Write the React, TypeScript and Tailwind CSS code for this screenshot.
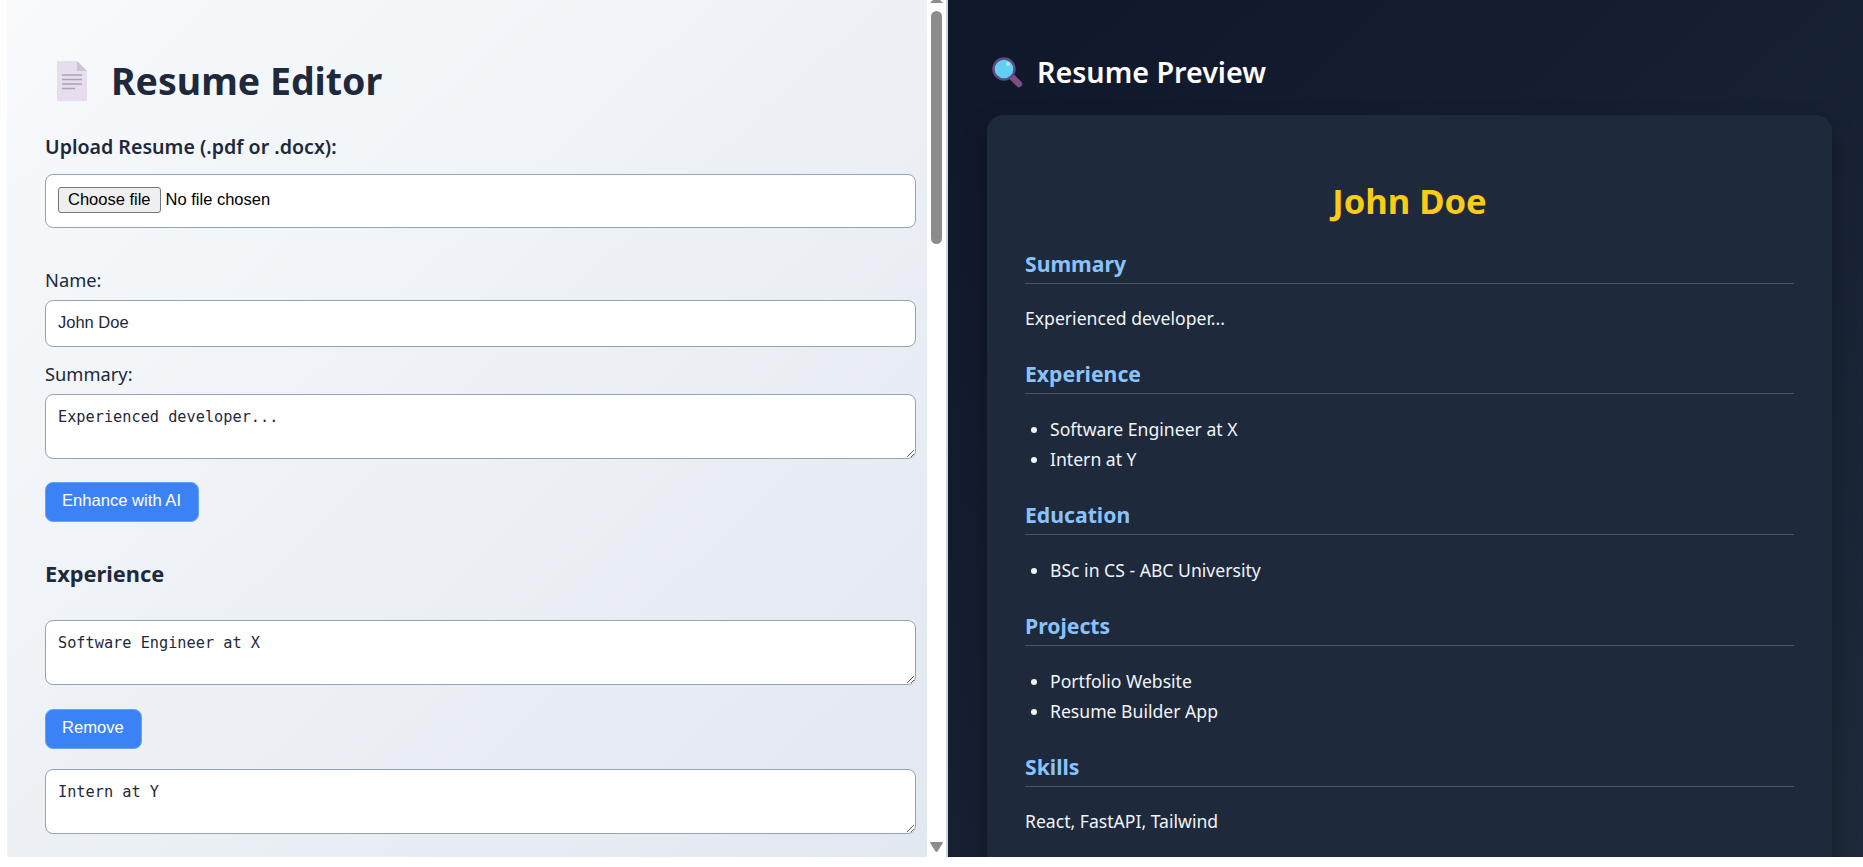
const sans = "font-['Noto_Sans','Open_Sans',sans-serif]";
const fieldClass =
  "block w-full rounded-lg border border-[#94a3b8] bg-white px-3 pb-[2px] font-['Liberation_Sans',Arial,sans-serif] text-[16.5px] text-[#1e293b]";
const areaClass =
  "block h-[65px] w-full rounded-lg border border-[#94a3b8] bg-white px-3 py-3 font-['DejaVu_Sans_Mono',monospace] text-[15.25px] leading-5 text-[#1e293b] outline-none";
const btnClass =
  "block h-10 rounded-lg border border-[#60a5fa] bg-[#3b82f6] pr-[17px] pb-px pl-4 font-['Liberation_Sans',Arial,sans-serif] text-[16.6px] text-white";

const DocIcon = () => (
  <svg width="30" height="40" viewBox="0 0 30 40" className="shrink-0">
    <path d="M0 0H20L30 10V40H0Z" fill="#e6deef" />
    <path d="M20 0L30 10H20Z" fill="#cbc4d2" />
    <path d="M5 14H25M5 18.5H25M5 23H25M5 27.5H18" stroke="#aaa3b3" strokeWidth="1.4" />
  </svg>
);

const SearchIcon = () => (
  <svg width="31" height="31" viewBox="0 0 31 31" className="shrink-0">
    <path d="M20 20L27 27" stroke="#834a88" strokeWidth="6.5" strokeLinecap="round" />
    <circle cx="12" cy="12" r="10.5" fill="#62d0ee" stroke="#5d4a86" strokeWidth="2.4" />
    <circle cx="16" cy="7" r="2" fill="#a8e8f8" />
  </svg>
);

const PreviewSection = ({ title, items, text }: { title: string; items?: string[]; text?: string }) => (
  <section className="mt-[26px]">
    <h3 className="border-b border-[#475569] pb-1 text-[21.2px] leading-[30px] font-bold text-[#8cc2fb]">{title}</h3>
    {text && <p className="mt-[22px] mb-[29px] text-[17.6px] leading-6 text-[#f1f5f9]">{text}</p>}
    {items && (
      <ul className="mt-5 list-disc pl-[25px] text-[17.6px] leading-[30px] text-[#f1f5f9]">
        {items.map((item) => (
          <li key={item}>{item}</li>
        ))}
      </ul>
    )}
  </section>
);

export default function App() {
  return (
    <div className={`flex h-[867px] overflow-hidden bg-white pb-[10px] pl-[7px] ${sans}`}>
      <main className="min-w-0 w-[920px] shrink-0 overflow-hidden bg-gradient-to-br from-[#f8fafc] to-[#e2e8f0] pt-[55px] pr-[11px] pl-[38px] text-[#1e293b]">
        <h1 className="flex h-[52px] items-center gap-[24px] pl-3 text-[37.5px] font-bold">
          <DocIcon />
          Resume Editor
        </h1>
        <label className="mt-7 block text-[19.6px] leading-6 font-semibold">Upload Resume (.pdf or .docx):</label>
        <div className={`${fieldClass} mt-[15px] flex h-[54px] items-center pb-0`}>
          <span className="flex h-[26px] items-center rounded-[3px] border border-[#767676] bg-[#efefef] px-[9px] pb-px text-black">Choose file</span>
          <span className="ml-[5px] pb-px text-black">No file chosen</span>
        </div>
        <label className="mt-10 block text-[18.3px] leading-6">Name:</label>
        <div className={`${fieldClass} mt-2 flex h-[47px] items-center`}>John Doe</div>
        <label className="mt-[15px] block text-[18.3px] leading-6">Summary:</label>
        <textarea readOnly defaultValue="Experienced developer..." className={`${areaClass} mt-2`} />
        <button type="button" className={`${btnClass} mt-[23px]`}>Enhance with AI</button>
        <h2 className="mt-[34px] text-[21.8px] leading-[36px] font-bold">Experience</h2>
        <textarea readOnly defaultValue="Software Engineer at X" className={`${areaClass} mt-7`} />
        <button type="button" className={`${btnClass} mt-6`}>Remove</button>
        <textarea readOnly defaultValue="Intern at Y" className={`${areaClass} mt-5`} />
      </main>
      <div className="flex w-[19px] shrink-0 flex-col items-center bg-white">
        <svg width="13" height="3" viewBox="0 0 13 3">
          <path d="M3 0H10L13 3H0Z" fill="#8c8c8c" />
        </svg>
        <div className="mt-2 h-[233px] w-[11px] rounded-full bg-[#8c8c8c]" />
        <svg width="13" height="10" viewBox="0 0 13 10" className="mt-auto mb-[5px]">
          <path d="M1 0H12C13 0 13 1 12.5 1.5L7.5 9.5C7 10 6 10 5.5 9.5L0.5 1.5C0 1 0 0 1 0Z" fill="#8c8c8c" />
        </svg>
      </div>
      <aside className="min-w-0 flex-1 overflow-hidden border-l-2 border-[#cbd5e1] bg-gradient-to-br from-[#0f172a] to-[#1e293b] pt-[52px] pr-[31px] pl-[39px] text-white">
        <h2 className="flex h-10 items-center gap-[14px] pl-[5px] text-[28.7px] font-semibold">
          <SearchIcon />
          Resume Preview
        </h2>
        <div className="mt-[23px] h-[900px] rounded-2xl bg-[#1e293b] px-[38px] pt-[64px] shadow-[0_10px_25px_rgba(0,0,0,0.3)]">
          <h1 className="text-center text-[34.6px] leading-[44px] font-bold text-[#facc15]">John Doe</h1>
          <PreviewSection title="Summary" text="Experienced developer..." />
          <PreviewSection title="Experience" items={["Software Engineer at X", "Intern at Y"]} />
          <PreviewSection title="Education" items={["BSc in CS - ABC University"]} />
          <PreviewSection title="Projects" items={["Portfolio Website", "Resume Builder App"]} />
          <PreviewSection title="Skills" text="React, FastAPI, Tailwind" />
        </div>
      </aside>
    </div>
  );
}
